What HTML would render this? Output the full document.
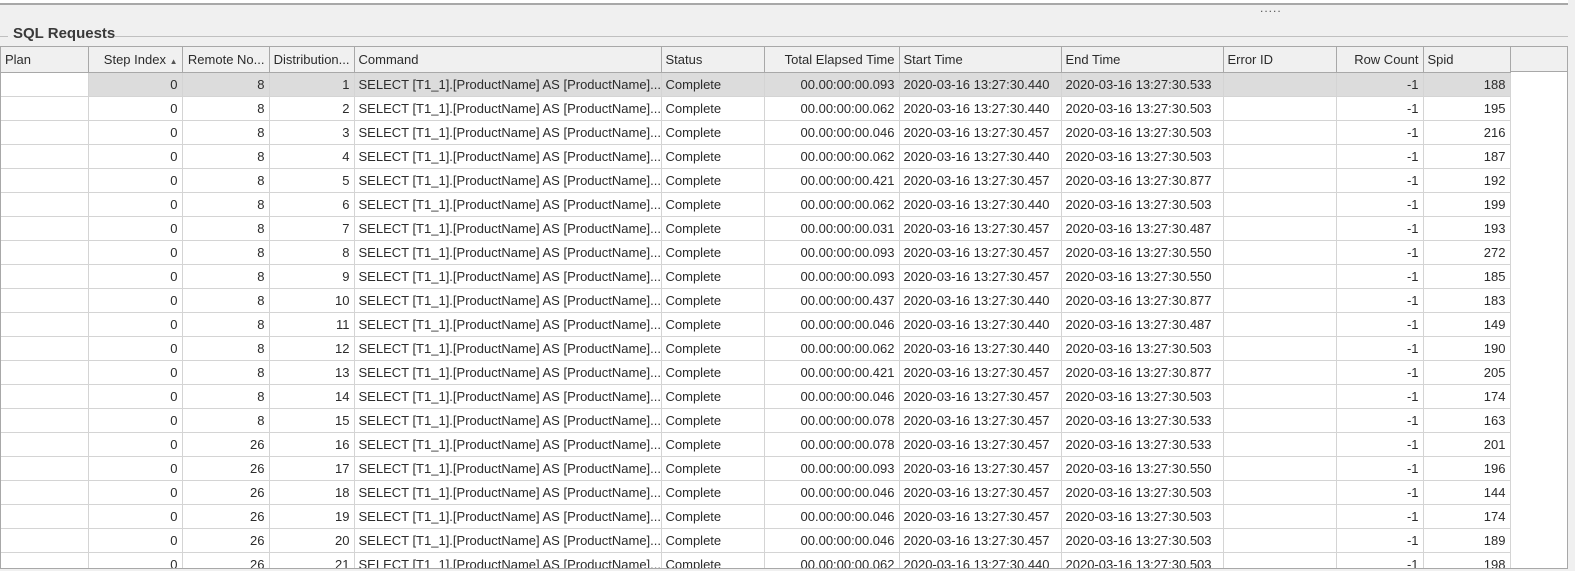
<!DOCTYPE html>
<html><head><meta charset="utf-8"><style>
html,body{margin:0;padding:0;width:1575px;height:571px;overflow:hidden;background:#f0f0f0;font-family:"Liberation Sans",Tahoma,sans-serif;font-size:13px;color:#2b2b2b}
.top{position:absolute;left:0;top:0;width:1568px;height:3px;background:#fff;border-bottom:2px solid #a8a8a8}
.dots{position:absolute;left:1260px;top:1px;font-size:12px;color:#555;letter-spacing:1px}
.gl{position:absolute;top:36px;height:1px;background:#c0c0c0}
.title{position:absolute;left:13px;top:25px;font-weight:bold;font-size:15px;color:#3a3a3a}
.grid{position:absolute;left:0;top:46px;width:1566px;height:521px;background:#fff;border:1px solid #a8a8a8;overflow:hidden}
.hdr{position:absolute;left:0;top:0;width:1566px;height:24px;background:#f0f0f0;border-bottom:1px solid #a8a8a8}
table{border-collapse:collapse;table-layout:fixed;position:absolute;left:0;top:0;width:1509px}
td,th{height:24px;padding:0 4px;white-space:nowrap;overflow:hidden;border-right:1px solid #d4d4d4;border-bottom:1px solid #d4d4d4;font-weight:normal;text-align:right;box-sizing:border-box}
th{height:25px;border-right:1px solid #a8a8a8;border-bottom:1px solid #a8a8a8;background:#f0f0f0}
.l{text-align:left}
tr.sel td{background:#dcdcdc}
tr.sel td:first-child{background:#fff}
</style></head><body>
<div class="top"></div>
<div class="dots">.....</div>
<div class="gl" style="left:0;width:8px"></div>
<div class="gl" style="left:115px;width:1453px"></div>
<div class="title">SQL Requests</div>
<div class="grid">
<div class="hdr"></div>
<table>
<colgroup><col style="width:87px"><col style="width:94px"><col style="width:87px"><col style="width:85px"><col style="width:307px"><col style="width:103px"><col style="width:135px"><col style="width:162px"><col style="width:162px"><col style="width:113px"><col style="width:87px"><col style="width:87px"></colgroup>
<tr><th class="l">Plan</th><th>Step Index <span style="font-size:8px;color:#555">&#9650;</span></th><th>Remote No...</th><th>Distribution...</th><th class="l">Command</th><th class="l">Status</th><th>Total Elapsed Time</th><th class="l">Start Time</th><th class="l">End Time</th><th class="l">Error ID</th><th>Row Count</th><th class="l">Spid</th></tr>
<tr class="sel"><td></td><td>0</td><td>8</td><td>1</td><td class="l">SELECT [T1_1].[ProductName] AS [ProductName]...</td><td class="l">Complete</td><td>00.00:00:00.093</td><td class="l">2020-03-16 13:27:30.440</td><td class="l">2020-03-16 13:27:30.533</td><td></td><td>-1</td><td>188</td></tr>
<tr><td></td><td>0</td><td>8</td><td>2</td><td class="l">SELECT [T1_1].[ProductName] AS [ProductName]...</td><td class="l">Complete</td><td>00.00:00:00.062</td><td class="l">2020-03-16 13:27:30.440</td><td class="l">2020-03-16 13:27:30.503</td><td></td><td>-1</td><td>195</td></tr>
<tr><td></td><td>0</td><td>8</td><td>3</td><td class="l">SELECT [T1_1].[ProductName] AS [ProductName]...</td><td class="l">Complete</td><td>00.00:00:00.046</td><td class="l">2020-03-16 13:27:30.457</td><td class="l">2020-03-16 13:27:30.503</td><td></td><td>-1</td><td>216</td></tr>
<tr><td></td><td>0</td><td>8</td><td>4</td><td class="l">SELECT [T1_1].[ProductName] AS [ProductName]...</td><td class="l">Complete</td><td>00.00:00:00.062</td><td class="l">2020-03-16 13:27:30.440</td><td class="l">2020-03-16 13:27:30.503</td><td></td><td>-1</td><td>187</td></tr>
<tr><td></td><td>0</td><td>8</td><td>5</td><td class="l">SELECT [T1_1].[ProductName] AS [ProductName]...</td><td class="l">Complete</td><td>00.00:00:00.421</td><td class="l">2020-03-16 13:27:30.457</td><td class="l">2020-03-16 13:27:30.877</td><td></td><td>-1</td><td>192</td></tr>
<tr><td></td><td>0</td><td>8</td><td>6</td><td class="l">SELECT [T1_1].[ProductName] AS [ProductName]...</td><td class="l">Complete</td><td>00.00:00:00.062</td><td class="l">2020-03-16 13:27:30.440</td><td class="l">2020-03-16 13:27:30.503</td><td></td><td>-1</td><td>199</td></tr>
<tr><td></td><td>0</td><td>8</td><td>7</td><td class="l">SELECT [T1_1].[ProductName] AS [ProductName]...</td><td class="l">Complete</td><td>00.00:00:00.031</td><td class="l">2020-03-16 13:27:30.457</td><td class="l">2020-03-16 13:27:30.487</td><td></td><td>-1</td><td>193</td></tr>
<tr><td></td><td>0</td><td>8</td><td>8</td><td class="l">SELECT [T1_1].[ProductName] AS [ProductName]...</td><td class="l">Complete</td><td>00.00:00:00.093</td><td class="l">2020-03-16 13:27:30.457</td><td class="l">2020-03-16 13:27:30.550</td><td></td><td>-1</td><td>272</td></tr>
<tr><td></td><td>0</td><td>8</td><td>9</td><td class="l">SELECT [T1_1].[ProductName] AS [ProductName]...</td><td class="l">Complete</td><td>00.00:00:00.093</td><td class="l">2020-03-16 13:27:30.457</td><td class="l">2020-03-16 13:27:30.550</td><td></td><td>-1</td><td>185</td></tr>
<tr><td></td><td>0</td><td>8</td><td>10</td><td class="l">SELECT [T1_1].[ProductName] AS [ProductName]...</td><td class="l">Complete</td><td>00.00:00:00.437</td><td class="l">2020-03-16 13:27:30.440</td><td class="l">2020-03-16 13:27:30.877</td><td></td><td>-1</td><td>183</td></tr>
<tr><td></td><td>0</td><td>8</td><td>11</td><td class="l">SELECT [T1_1].[ProductName] AS [ProductName]...</td><td class="l">Complete</td><td>00.00:00:00.046</td><td class="l">2020-03-16 13:27:30.440</td><td class="l">2020-03-16 13:27:30.487</td><td></td><td>-1</td><td>149</td></tr>
<tr><td></td><td>0</td><td>8</td><td>12</td><td class="l">SELECT [T1_1].[ProductName] AS [ProductName]...</td><td class="l">Complete</td><td>00.00:00:00.062</td><td class="l">2020-03-16 13:27:30.440</td><td class="l">2020-03-16 13:27:30.503</td><td></td><td>-1</td><td>190</td></tr>
<tr><td></td><td>0</td><td>8</td><td>13</td><td class="l">SELECT [T1_1].[ProductName] AS [ProductName]...</td><td class="l">Complete</td><td>00.00:00:00.421</td><td class="l">2020-03-16 13:27:30.457</td><td class="l">2020-03-16 13:27:30.877</td><td></td><td>-1</td><td>205</td></tr>
<tr><td></td><td>0</td><td>8</td><td>14</td><td class="l">SELECT [T1_1].[ProductName] AS [ProductName]...</td><td class="l">Complete</td><td>00.00:00:00.046</td><td class="l">2020-03-16 13:27:30.457</td><td class="l">2020-03-16 13:27:30.503</td><td></td><td>-1</td><td>174</td></tr>
<tr><td></td><td>0</td><td>8</td><td>15</td><td class="l">SELECT [T1_1].[ProductName] AS [ProductName]...</td><td class="l">Complete</td><td>00.00:00:00.078</td><td class="l">2020-03-16 13:27:30.457</td><td class="l">2020-03-16 13:27:30.533</td><td></td><td>-1</td><td>163</td></tr>
<tr><td></td><td>0</td><td>26</td><td>16</td><td class="l">SELECT [T1_1].[ProductName] AS [ProductName]...</td><td class="l">Complete</td><td>00.00:00:00.078</td><td class="l">2020-03-16 13:27:30.457</td><td class="l">2020-03-16 13:27:30.533</td><td></td><td>-1</td><td>201</td></tr>
<tr><td></td><td>0</td><td>26</td><td>17</td><td class="l">SELECT [T1_1].[ProductName] AS [ProductName]...</td><td class="l">Complete</td><td>00.00:00:00.093</td><td class="l">2020-03-16 13:27:30.457</td><td class="l">2020-03-16 13:27:30.550</td><td></td><td>-1</td><td>196</td></tr>
<tr><td></td><td>0</td><td>26</td><td>18</td><td class="l">SELECT [T1_1].[ProductName] AS [ProductName]...</td><td class="l">Complete</td><td>00.00:00:00.046</td><td class="l">2020-03-16 13:27:30.457</td><td class="l">2020-03-16 13:27:30.503</td><td></td><td>-1</td><td>144</td></tr>
<tr><td></td><td>0</td><td>26</td><td>19</td><td class="l">SELECT [T1_1].[ProductName] AS [ProductName]...</td><td class="l">Complete</td><td>00.00:00:00.046</td><td class="l">2020-03-16 13:27:30.457</td><td class="l">2020-03-16 13:27:30.503</td><td></td><td>-1</td><td>174</td></tr>
<tr><td></td><td>0</td><td>26</td><td>20</td><td class="l">SELECT [T1_1].[ProductName] AS [ProductName]...</td><td class="l">Complete</td><td>00.00:00:00.046</td><td class="l">2020-03-16 13:27:30.457</td><td class="l">2020-03-16 13:27:30.503</td><td></td><td>-1</td><td>189</td></tr>
<tr><td></td><td>0</td><td>26</td><td>21</td><td class="l">SELECT [T1_1].[ProductName] AS [ProductName]...</td><td class="l">Complete</td><td>00.00:00:00.062</td><td class="l">2020-03-16 13:27:30.440</td><td class="l">2020-03-16 13:27:30.503</td><td></td><td>-1</td><td>198</td></tr>
</table>
</div>
</body></html>
